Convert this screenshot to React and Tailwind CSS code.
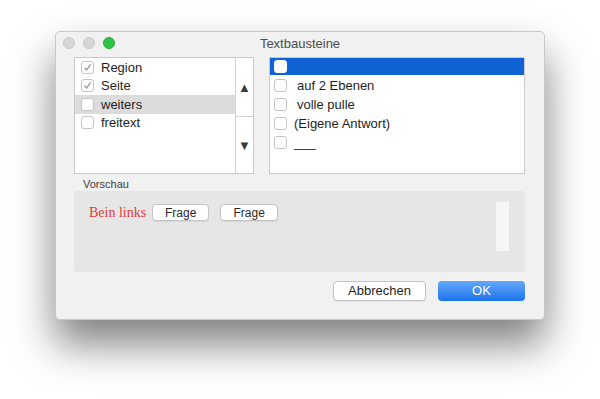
import React from 'react';

const font = { fontFamily: '"Liberation Sans", Arial, sans-serif' };

const Box = ({ checked, selected }) => (
  <span
    className={`flex h-[13px] w-[13px] shrink-0 items-center justify-center rounded-[3px] border ${
      selected ? 'border-white bg-white' : 'border-[#c4c4c4] bg-white'
    }`}
  >
    {checked && (
      <svg width="9" height="9" viewBox="0 0 9 9">
        <path d="M1.5 4.8 L3.6 7 L7.6 1.4" fill="none" stroke="#9a9a9a" strokeWidth="1.3" />
      </svg>
    )}
  </span>
);

const leftRows = [
  { label: 'Region', checked: true },
  { label: 'Seite', checked: true },
  { label: 'weiters', checked: false, hl: true },
  { label: 'freitext', checked: false },
];

const rightRows = [
  { label: '', sel: true },
  { label: ' auf 2 Ebenen', pad: true },
  { label: ' volle pulle', pad: true },
  { label: '(Eigene Antwort)' },
  { label: '___' },
];

export default function App() {
  return (
    <div className="h-[399px] w-[600px] overflow-hidden bg-white pl-[55px] pt-[31px]" style={font}>
      <div className="flex h-[289px] w-[490px] flex-col rounded-[5px] border border-[#c8c8c8] bg-[#f1f1f1] shadow-[0_24px_42px_rgba(0,0,0,0.5)]">
        {/* title bar */}
        <div className="relative flex h-[22px] items-center justify-center">
          <div className="absolute left-[7px] top-[5px] flex gap-[8px]">
            <span className="h-[12px] w-[12px] rounded-full border border-[#c9c9c9] bg-[#d6d6d6]" />
            <span className="h-[12px] w-[12px] rounded-full border border-[#c9c9c9] bg-[#d6d6d6]" />
            <span className="h-[12px] w-[12px] rounded-full border border-[#25a837] bg-[#2fc544]" />
          </div>
          <span className="pt-[1px] text-[13px] text-[#4b4b4b]">Textbausteine</span>
        </div>

        <div className="flex flex-1 flex-col pl-[18px] pr-[19px] pt-[3px]">
          {/* lists */}
          <div className="flex h-[117px] gap-[15px]">
            <div className="flex w-[180px] border border-[#c9c9c9] bg-white">
              <div className="flex flex-1 flex-col">
                {leftRows.map((r) => (
                  <div
                    key={r.label}
                    className={`flex h-[18.5px] items-center gap-[7px] pl-[6px] text-[13px] text-[#1e1e1e] ${
                      r.hl ? 'bg-[#dcdcdc]' : ''
                    }`}
                  >
                    <Box checked={r.checked} />
                    <span>{r.label}</span>
                  </div>
                ))}
              </div>
              <div className="flex w-[18px] flex-col border-l border-[#d0d0d0] bg-white">
                <div className="flex flex-1 items-center justify-center border-b border-[#d0d0d0] pt-[2px] text-[13px] text-[#3a3a3a]">
                  ▲
                </div>
                <div className="flex flex-1 items-center justify-center pt-[1px] text-[13px] text-[#3a3a3a]">
                  ▼
                </div>
              </div>
            </div>

            <div className="flex w-[256px] flex-col border border-[#c9c9c9] bg-white">
              {rightRows.map((r, i) => (
                <div
                  key={i}
                  className={`flex items-center gap-[7px] pl-[4px] text-[13px] text-[#1e1e1e] ${
                    r.sel ? 'h-[17px] bg-[#0f63d4]' : 'h-[19px]'
                  } ${i === 1 ? 'mt-[1px]' : ''}`}
                >
                  <Box selected={r.sel} />
                  <span className={r.pad ? 'pl-[3px]' : ''}>{r.label}</span>
                </div>
              ))}
            </div>
          </div>

          {/* preview */}
          <div className="pl-[9px] pt-[4px] text-[11px] leading-[13px] text-[#3c3c3c]">Vorschau</div>
          <div className="flex h-[81px] items-start justify-between rounded-[3px] bg-[#e6e6e6] pl-[15px] pr-[16px] pt-[11px]">
            <div className="flex items-center gap-[6px]">
              <span
                className="text-[14px] text-[#e23b3b]"
                style={{ fontFamily: '"Liberation Serif", "Times New Roman", serif' }}
              >
                Bein links
              </span>
              <button className="flex h-[17px] w-[57px] items-center justify-center rounded-[4px] border border-[#c3c3c3] bg-white text-[12px] text-[#2a2a2a] shadow-[0_1px_0_rgba(0,0,0,0.06)]">
                Frage
              </button>
              <button className="ml-[5px] flex h-[17px] w-[58px] items-center justify-center rounded-[4px] border border-[#c3c3c3] bg-white text-[12px] text-[#2a2a2a] shadow-[0_1px_0_rgba(0,0,0,0.06)]">
                Frage
              </button>
            </div>
            <div className="h-[49px] w-[13px] bg-[#f6f6f6]" />
          </div>

          {/* buttons */}
          <div className="flex justify-end gap-[12px] pt-[9px]">
            <button className="flex h-[20px] w-[93px] items-center justify-center rounded-[4px] border border-[#c3c3c3] bg-white text-[13px] text-[#1e1e1e] shadow-[0_1px_0_rgba(0,0,0,0.06)]">
              Abbrechen
            </button>
            <button className="flex h-[20px] w-[87px] items-center justify-center rounded-[4px] bg-gradient-to-b from-[#62a8f8] to-[#1a73ee] text-[13px] text-white">
              OK
            </button>
          </div>
        </div>
      </div>
    </div>
  );
}
